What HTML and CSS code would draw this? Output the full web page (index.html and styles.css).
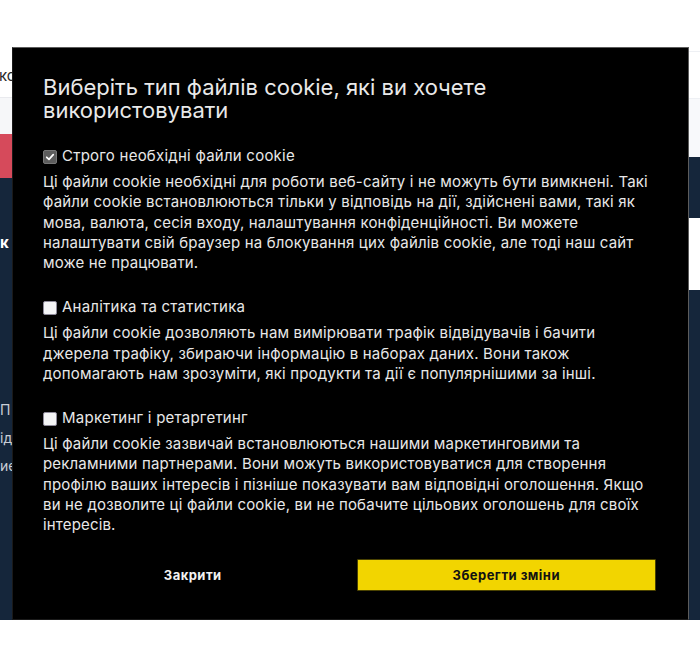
FILE: index.html
```html
<!DOCTYPE html>
<html lang="uk">
<head>
<meta charset="utf-8">
<title>Cookie</title>
<link rel="stylesheet" href="styles.css">
</head>
<body>
<div class="page">
  <div class="col col-left">
    <div class="blk head-l"><span class="nav-txt">ко</span></div>
    <div class="blk grey-l"></div>
    <div class="blk red-l"></div>
    <div class="blk navy-l">
      <div class="nv-bold">к</div>
      <div class="nv-lines">
        <div>П т</div>
        <div>ід</div>
        <div>ие</div>
      </div>
    </div>
  </div>
  <div class="col col-right">
    <div class="blk head-r"></div>
    <div class="blk grey-r"></div>
    <div class="blk navy-r1"></div>
    <div class="blk white-r"></div>
    <div class="blk navy-r2"></div>
  </div>
</div>

<div class="modal">
  <h2 class="title">Виберіть тип файлів cookie, які ви хочете використовувати</h2>

  <div class="section">
    <div class="opt">
      <span class="box box-on"><svg viewBox="0 0 14 14" width="14" height="14"><path d="M3.2 7.3 L5.8 9.8 L10.8 4.3" fill="none" stroke="#fff" stroke-width="2" stroke-linecap="round" stroke-linejoin="round"/></svg></span>
      <span class="opt-txt">Строго необхідні файли cookie</span>
    </div>
    <p class="desc">Ці файли cookie необхідні для роботи веб-сайту і не можуть бути вимкнені. Такі файли cookie встановлюються тільки у відповідь на дії, здійснені вами, такі як мова, валюта, сесія входу, налаштування конфіденційності. Ви можете налаштувати свій браузер на блокування цих файлів cookie, але тоді наш сайт може не працювати.</p>
  </div>

  <div class="section">
    <div class="opt">
      <span class="box box-off"></span>
      <span class="opt-txt">Аналітика та статистика</span>
    </div>
    <p class="desc">Ці файли cookie дозволяють нам вимірювати трафік відвідувачів і бачити джерела трафіку, збираючи інформацію в наборах даних. Вони також допомагають нам зрозуміти, які продукти та дії є популярнішими за інші.</p>
  </div>

  <div class="section">
    <div class="opt">
      <span class="box box-off"></span>
      <span class="opt-txt">Маркетинг і ретаргетинг</span>
    </div>
    <p class="desc">Ці файли cookie зазвичай встановлюються нашими маркетинговими та рекламними партнерами. Вони можуть використовуватися для створення профілю ваших інтересів і пізніше показувати вам відповідні оголошення. Якщо ви не дозволите ці файли cookie, ви не побачите цільових оголошень для своїх інтересів.</p>
  </div>

  <div class="actions">
    <button class="btn btn-close">Закрити</button>
    <button class="btn btn-save">Зберегти зміни</button>
  </div>
</div>
</body>
</html>
```
FILE: styles.css
```css
html, body {
  margin: 0;
  padding: 0;
  background: #ffffff;
}
body {
  font-family: "Inter", "Noto Sans", sans-serif;
  width: 700px;
  height: 650px;
  overflow: hidden;
  position: relative;
}

/* background page */
.page {
  display: flex;
  width: 700px;
}
.col {
  display: flex;
  flex-direction: column;
}
.col-left { width: 350px; }
.col-right { flex: 1; }

.head-l {
  height: 98px;
  box-sizing: border-box;
  border-bottom: 1px solid #e9eaee;
  background: #fff;
  padding-top: 66px;
}
.nav-txt {
  display: block;
  font-size: 15px;
  line-height: 20px;
  color: #2a2a2a;
  margin-left: -1px;
}
.grey-l { height: 36px; background: #f6f7f9; }
.red-l { height: 44px; background: #d64a5b; }
.navy-l {
  height: 442px;
  background: #15263b;
  color: #d5d9df;
  font-size: 14px;
}
.nv-bold {
  font-weight: 700;
  color: #ffffff;
  font-size: 15px;
  margin-top: 55px;
}
.nv-lines {
  margin-top: 144px;
  line-height: 28px;
  font-size: 14px;
  color: #c9ced6;
}

.head-r {
  margin-top: 51px;
  height: 47px;
  box-sizing: border-box;
  border-top: 1px solid #eef0f4;
  background: #fff;
}
.grey-r { height: 59px; background: #f8f9fb; border-top: 1px solid #eef0f4; box-sizing: border-box; }
.navy-r1 { height: 61px; background: #15263b; }
.white-r { height: 72px; background: #ffffff; }
.navy-r2 { height: 330px; background: #15263b; }

/* modal */
.modal {
  position: absolute;
  top: 47px;
  left: 12px;
  width: 677px;
  box-sizing: border-box;
  background: #000000;
  border: 1px solid #5c5c5c;
  border-left-color: #1a1a1a;
  border-bottom-color: #1a1a1a;
  padding: 28px 32px 28px 30px;
  color: #ececec;
}
.title {
  margin: 0 0 24px 0;
  font-size: 22px;
  line-height: 23px;
  font-weight: 400;
  color: #e9e9e9;
}
.section { margin-bottom: 24px; }
.section:last-of-type { margin-bottom: 0; }
.opt {
  display: flex;
  align-items: center;
  height: 20px;
  margin-bottom: 6px;
}
.box {
  width: 14px;
  height: 14px;
  box-sizing: border-box;
  border-radius: 2px;
  margin-right: 5px;
  flex: none;
  display: flex;
  align-items: center;
  justify-content: center;
  margin-top: 1px;
}
.box svg { display: block; }
.box-on {
  background: #5d5d5d;
  border: 1px solid #777;
}
.box-off {
  background: #f4f4f6;
  border: 1px solid #8e8a9a;
}
.opt-txt {
  font-size: 15px;
  line-height: 20px;
  letter-spacing: 0.24px;
  color: #e8e8e8;
}
.desc {
  margin: 0;
  font-size: 15px;
  line-height: 20.25px;
  letter-spacing: 0.17px;
  color: #e8e8e8;
}
.actions {
  display: grid;
  grid-template-columns: 1fr 1fr;
  column-gap: 14px;
  margin-top: 24px;
}
.btn {
  height: 32px;
  font-family: "Inter", "Noto Sans", sans-serif;
  font-size: 13px;
  font-weight: 700;
  letter-spacing: 0.45px;
  border-radius: 1px;
  cursor: pointer;
  padding: 0;
}
.btn-close {
  background: transparent;
  border: none;
  color: #f2f2f2;
}
.btn-save {
  background: #f2d500;
  border: 1px solid #4a4200;
  color: #121212;
}
```
